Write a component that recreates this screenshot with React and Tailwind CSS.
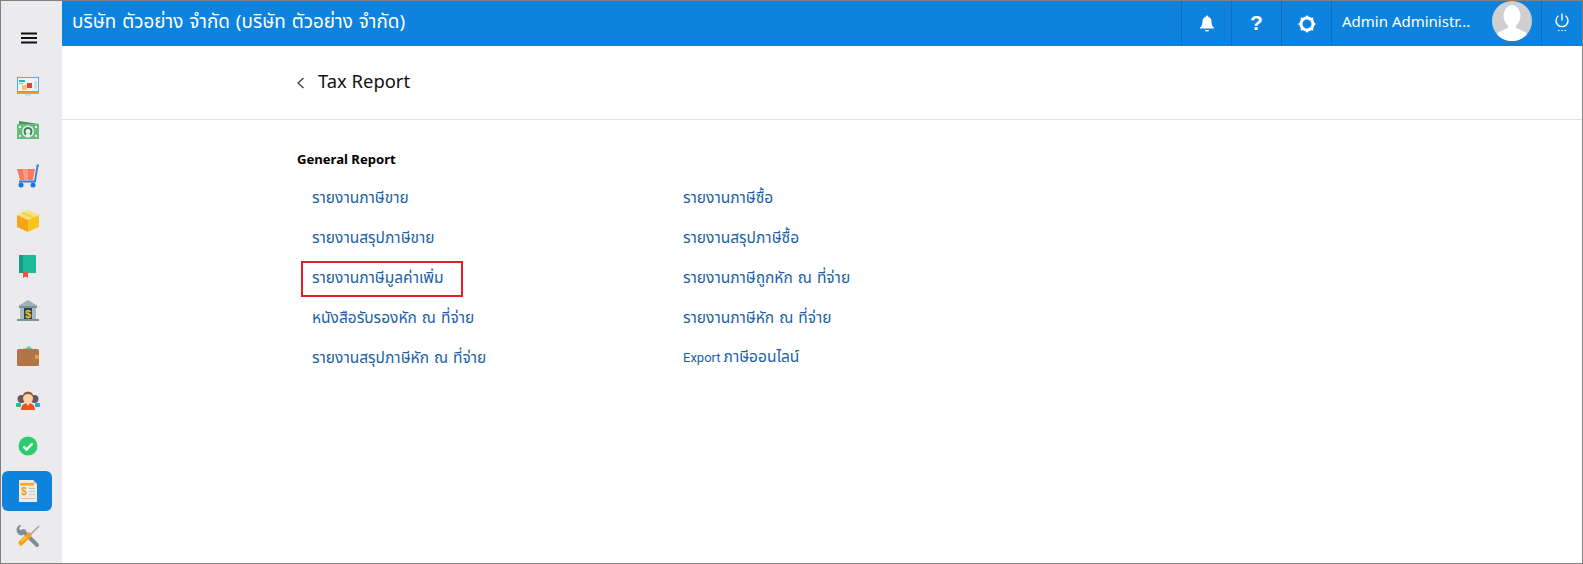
const font = "font-['Noto_Sans','Open_Sans','Noto_Sans_Thai','Liberation_Sans',sans-serif]";

const IconDesktop = () => (
  <svg width="24" height="24" viewBox="0 0 24 24">
    <rect x="1" y="3" width="22" height="15" fill="#5aa9e6" />
    <rect x="2" y="4" width="20" height="13" fill="#eef3f5" />
    <rect x="3" y="6" width="6" height="2" fill="#2ab3c4" />
    <rect x="3" y="9" width="4" height="1" fill="#9fb4bf" />
    <rect x="6" y="11" width="5" height="5" fill="#f5c76b" />
    <rect x="11" y="9" width="5" height="5" fill="#e8413c" />
    <rect x="18" y="7" width="3" height="8" fill="#d5dde2" />
    <rect x="1" y="18" width="22" height="2" fill="#f59a30" />
    <rect x="9" y="20" width="6" height="2" fill="#bfe3ea" />
  </svg>
);

const IconMoney = () => (
  <svg width="24" height="20" viewBox="0 0 24 20">
    <path d="M3 0l20 3v2H3z" fill="#3f9a62" />
    <rect x="1" y="3" width="22" height="15" fill="#66bb7d" />
    <circle cx="12" cy="10.500" r="6" fill="#e6f3e8" />
    <circle cx="12" cy="10.500" r="3.500" fill="none" stroke="#3c7f57" strokeWidth="2" />
    <rect x="10" y="13" width="4" height="3" fill="#e6f3e8" />
    <rect x="3" y="5" width="2" height="2" fill="#e6f3e8" />
    <rect x="19" y="5" width="2" height="2" fill="#e6f3e8" />
    <rect x="3" y="14" width="2" height="2" fill="#e6f3e8" />
    <rect x="19" y="14" width="2" height="2" fill="#e6f3e8" />
  </svg>
);

const IconCart = () => (
  <svg width="24" height="24" viewBox="0 0 24 24">
    <path d="M1 5h18l-2 11H4z" fill="#fb7a5f" />
    <path d="M7 5h5v11H8z" fill="#fd9a82" />
    <path d="M23 1.500h-1.500L19 17.500H3" fill="none" stroke="#2a7de1" strokeWidth="1.800" />
    <circle cx="5" cy="21" r="2.500" fill="#1673e0" />
    <circle cx="17" cy="21" r="2.500" fill="#1673e0" />
  </svg>
);

const IconBox = () => (
  <svg width="24" height="24" viewBox="0 0 24 24">
    <path d="M12 1l11 5-11 5L1 6z" fill="#fde27a" />
    <path d="M1 6l11 5v12L1 18z" fill="#f7a416" />
    <path d="M23 6l-11 5v12l11-5z" fill="#f4c51d" />
    <path d="M6 3.500l11 5" stroke="#f2cf5a" strokeWidth="2" />
  </svg>
);

const IconBook = () => (
  <svg width="20" height="24" viewBox="0 0 20 24">
    <rect x="1" y="1" width="17" height="19" rx="1" fill="#1abc9c" />
    <rect x="1" y="1" width="4" height="19" fill="#149a80" />
    <rect x="1" y="19" width="17" height="3" fill="#dfeee9" />
    <path d="M5 18h5v6l-2.500-1.500L5 24z" fill="#e8534a" />
  </svg>
);

const IconBank = () => (
  <svg width="24" height="24" viewBox="0 0 24 24">
    <path d="M12 1l10 6H2z" fill="#9fb2ba" />
    <rect x="3" y="7" width="18" height="2" fill="#7d939c" />
    <rect x="8" y="9" width="8" height="11" fill="#2e4450" />
    <rect x="4" y="9" width="4" height="11" fill="#a9bbc2" />
    <rect x="16" y="9" width="4" height="11" fill="#a9bbc2" />
    <text x="12" y="18.500" textAnchor="middle" fontSize="11" fontWeight="700" fill="#f2c230" fontFamily="Liberation Sans">$</text>
    <rect x="1" y="20" width="22" height="2" fill="#7d939c" />
  </svg>
);

const IconWallet = () => (
  <svg width="24" height="22" viewBox="0 0 24 22">
    <path d="M3 5l7-2 3-2 5 4z" fill="#6fc7a9" />
    <rect x="1" y="4" width="22" height="17" rx="1.500" fill="#b27449" />
    <rect x="19" y="10" width="4" height="4" rx="1" fill="#e8a33d" />
  </svg>
);

const IconPeople = () => (
  <svg width="24" height="20" viewBox="0 0 24 20">
    <circle cx="5.500" cy="8" r="4" fill="#6a5560" />
    <circle cx="18.500" cy="8" r="4" fill="#6a5560" />
    <rect x="0" y="12" width="5" height="4" rx="1" fill="#1fc08e" />
    <rect x="19" y="12" width="5" height="4" rx="1" fill="#2d9ff0" />
    <circle cx="12" cy="6" r="5.500" fill="#8c5a3c" />
    <ellipse cx="12" cy="7.500" rx="5" ry="4.500" fill="#fcd2a8" />
    <path d="M5 19c0-4 2-7 7-7s7 3 7 7z" fill="#f1501f" />
    <path d="M9.500 11.500h5L12 15z" fill="#fcd2a8" />
  </svg>
);

const IconCheck = () => (
  <svg width="20" height="20" viewBox="0 0 20 20">
    <circle cx="10" cy="10" r="9.500" fill="#2ecc71" />
    <path d="M5.500 10.500l3 3 6-6" fill="none" stroke="#fff" strokeWidth="2.400" />
  </svg>
);

const IconReport = () => (
  <svg width="20" height="24" viewBox="0 0 20 24">
    <path d="M1 1h14l4 4v18H1z" fill="#ecebe6" />
    <path d="M15 1l4 4h-4z" fill="#cfcfcb" />
    <rect x="2" y="4" width="14" height="2.500" fill="#f5a623" />
    <text x="6" y="16" textAnchor="middle" fontSize="10" fontWeight="700" fill="#ef9a1d" fontFamily="Liberation Sans">$</text>
    <rect x="11" y="9" width="6" height="1" fill="#b9b9b5" />
    <rect x="11" y="12" width="6" height="1" fill="#c9c9c5" />
    <rect x="11" y="15" width="6" height="1" fill="#c9c9c5" />
    <rect x="3" y="19" width="14" height="1" fill="#c9c9c5" />
  </svg>
);

const IconTools = () => (
  <svg width="24" height="24" viewBox="0 0 24 24">
    <path d="M7 7l14 14" stroke="#7f8f96" strokeWidth="4" strokeLinecap="round" />
    <path d="M6 1.500L3.500 5 6.500 8 10 5.500a5 5 0 0 1-1 5 5 5 0 0 1-6 .5A6 6 0 0 1 1 6 5 5 0 0 1 6 1.500z" fill="#7f8f96" transform="translate(-.5 -.5)" />
    <path d="M23 2L13 12" stroke="#9aa8ae" strokeWidth="1.600" />
    <path d="M13 11L5 19" stroke="#f59f1d" strokeWidth="5" strokeLinecap="round" />
    <path d="M10 13l-4 4" stroke="#fbd23c" strokeWidth="1.500" strokeLinecap="round" />
  </svg>
);

const sideIcons = [IconDesktop, IconMoney, IconCart, IconBox, IconBook, IconBank, IconWallet, IconPeople, IconCheck, IconReport, IconTools];

const leftLinks = ['รายงานภาษีขาย', 'รายงานสรุปภาษีขาย', 'รายงานภาษีมูลค่าเพิ่ม', 'หนังสือรับรองหัก ณ ที่จ่าย', 'รายงานสรุปภาษีหัก ณ ที่จ่าย'];
const rightLinks = ['รายงานภาษีซื้อ', 'รายงานสรุปภาษีซื้อ', 'รายงานภาษีถูกหัก ณ ที่จ่าย', 'รายงานภาษีหัก ณ ที่จ่าย', 'ภาษีออนไลน์'];

function Sidebar() {
  return (
    <aside className="w-[61px] shrink-0 bg-[#ebebee] flex flex-col pl-[1px]">
      <div className="h-[65px] pt-[31px] pl-[19px]">
        <svg width="16" height="12" viewBox="0 0 16 12" className="block">
          <path d="M0 1.500h16M0 6h16M0 10.500h16" stroke="#111" strokeWidth="2" />
        </svg>
      </div>
      <div className="flex flex-col">
        {sideIcons.map((Icon, i) => (
          <div key={i} className={`h-[40px] w-[50px] mb-[5px] pl-[2px] rounded-[6px] flex items-center justify-center ${i === 9 ? 'bg-[#0d83dd]' : ''}`}>
            <Icon />
          </div>
        ))}
      </div>
    </aside>
  );
}

function TopBar() {
  return (
    <header className="h-[45px] shrink-0 bg-[#0d83dd] text-white flex items-stretch">
      <div className="flex-1 pl-[10px] text-[18.900px] leading-[41px] [word-spacing:1px]">บริษัท ตัวอย่าง จำกัด (บริษัท ตัวอย่าง จำกัด)</div>
      <div className="w-[50px] border-l border-[#0b6fbd] flex items-center justify-center">
        <svg width="16" height="17" viewBox="0 0 16 17" fill="#fff">
          <path d="M8 0.500a1.200 1.200 0 0 1 1.200 1.300c2.300.6 3.300 2.500 3.300 4.700 0 3.500 1 4.800 2.500 6.200v.8H1v-.8c1.500-1.400 2.500-2.700 2.500-6.200 0-2.200 1-4.100 3.300-4.700A1.200 1.200 0 0 1 8 .5z" />
          <path d="M6 15h4a2 1.500 0 0 1-4 0z" />
        </svg>
      </div>
      <div className="w-[50px] border-l border-[#0b6fbd] flex items-center justify-center text-[21px] font-bold leading-none pb-[3px] font-['Liberation_Sans',sans-serif]">?</div>
      <div className="w-[50px] border-l border-[#0b6fbd] flex items-center justify-center">
        <svg width="18" height="18" viewBox="0 0 18 18">
          <circle cx="9" cy="9" r="6" fill="none" stroke="#fff" strokeWidth="3" />
          <path d="M9 0l2 2.500H7zM9 18l2-2.500H7zM0 9l2.500 2V7zM18 9l-2.500 2V7zM2.600 2.600l3.100.4-2.700 2.700zM15.400 2.600l-3.100.4 2.700 2.700zM2.600 15.400l3.100-.4-2.700-2.700zM15.400 15.400l-3.100-.4 2.700-2.700z" fill="#fff" />
        </svg>
      </div>
      <div className="w-[210px] border-l border-[#0b6fbd] flex items-center pl-[10px] relative">
        <span className="text-[15px] leading-none pb-[4px]">Admin Administr...</span>
        <div className="absolute left-[160px] top-0 w-[40px] h-[40px] rounded-full bg-[#cfcfcf] overflow-hidden">
          <svg width="40" height="40" viewBox="0 0 40 40">
            <ellipse cx="20" cy="15" rx="8.500" ry="11" fill="#fff" />
            <path d="M16 22h8v5l9 4c2 1 3 4 3 9H4c0-5 1-8 3-9l9-4z" fill="#fff" />
          </svg>
        </div>
      </div>
      <div className="w-[41px] border-l border-[#0b6fbd] flex items-center justify-center pb-[3px]">
        <svg width="14" height="18" viewBox="0 0 14 18" fill="none" stroke="#fff">
          <path d="M7 0.500v7" strokeWidth="1.400" />
          <path d="M3.500 2.800a6 6 0 1 0 7 0" strokeWidth="1.400" />
          <path d="M3 17.500h1.500M6.300 17.500h1.500M9.500 17.500h1.500" strokeWidth="1" />
        </svg>
      </div>
    </header>
  );
}

function LinkColumn({ links, boxed, prefix }) {
  return (
    <ul className="flex flex-col">
      {links.map((label, i) => (
        <li key={label} className="h-[40px] flex items-center pl-[15px] relative">
          <a className="text-[15.500px] leading-[22px] text-[#1a5fa8] whitespace-nowrap [word-spacing:1px]">
            {prefix && i === links.length - 1 && <span className="text-[13px] font-['Roboto',sans-serif] mr-[3px]">{prefix}</span>}
            {label}
          </a>
          {boxed === i && <span className="absolute left-[4px] top-[4px] w-[162px] h-[36px] border-2 border-[#ed1c24]" />}
        </li>
      ))}
    </ul>
  );
}

export default function App() {
  return (
    <div className={`${font} w-[1583px] h-[564px] overflow-hidden flex border border-[#808080] bg-white`}>
      <Sidebar />
      <div className="flex-1 flex flex-col min-w-0">
        <TopBar />
        <div className="h-[74px] shrink-0 border-b border-[#e2e2e2] flex items-center pl-[235px] gap-[13px]">
          <svg width="8" height="12" viewBox="0 0 8 12" fill="none">
            <path d="M6.500 1L1 6l5.500 5" stroke="#444" strokeWidth="1.500" />
          </svg>
          <h1 className="text-[18.400px] text-[#111] leading-none pb-[3px]">Tax Report</h1>
        </div>
        <div className="pl-[235px] pt-[30px]">
          <h2 className="text-[13.100px] font-bold text-black leading-[18px] mb-[9px]">General Report</h2>
          <div className="flex">
            <div className="w-[371px]">
              <LinkColumn links={leftLinks} boxed={2} />
            </div>
            <LinkColumn links={rightLinks} prefix="Export" />
          </div>
        </div>
      </div>
    </div>
  );
}
